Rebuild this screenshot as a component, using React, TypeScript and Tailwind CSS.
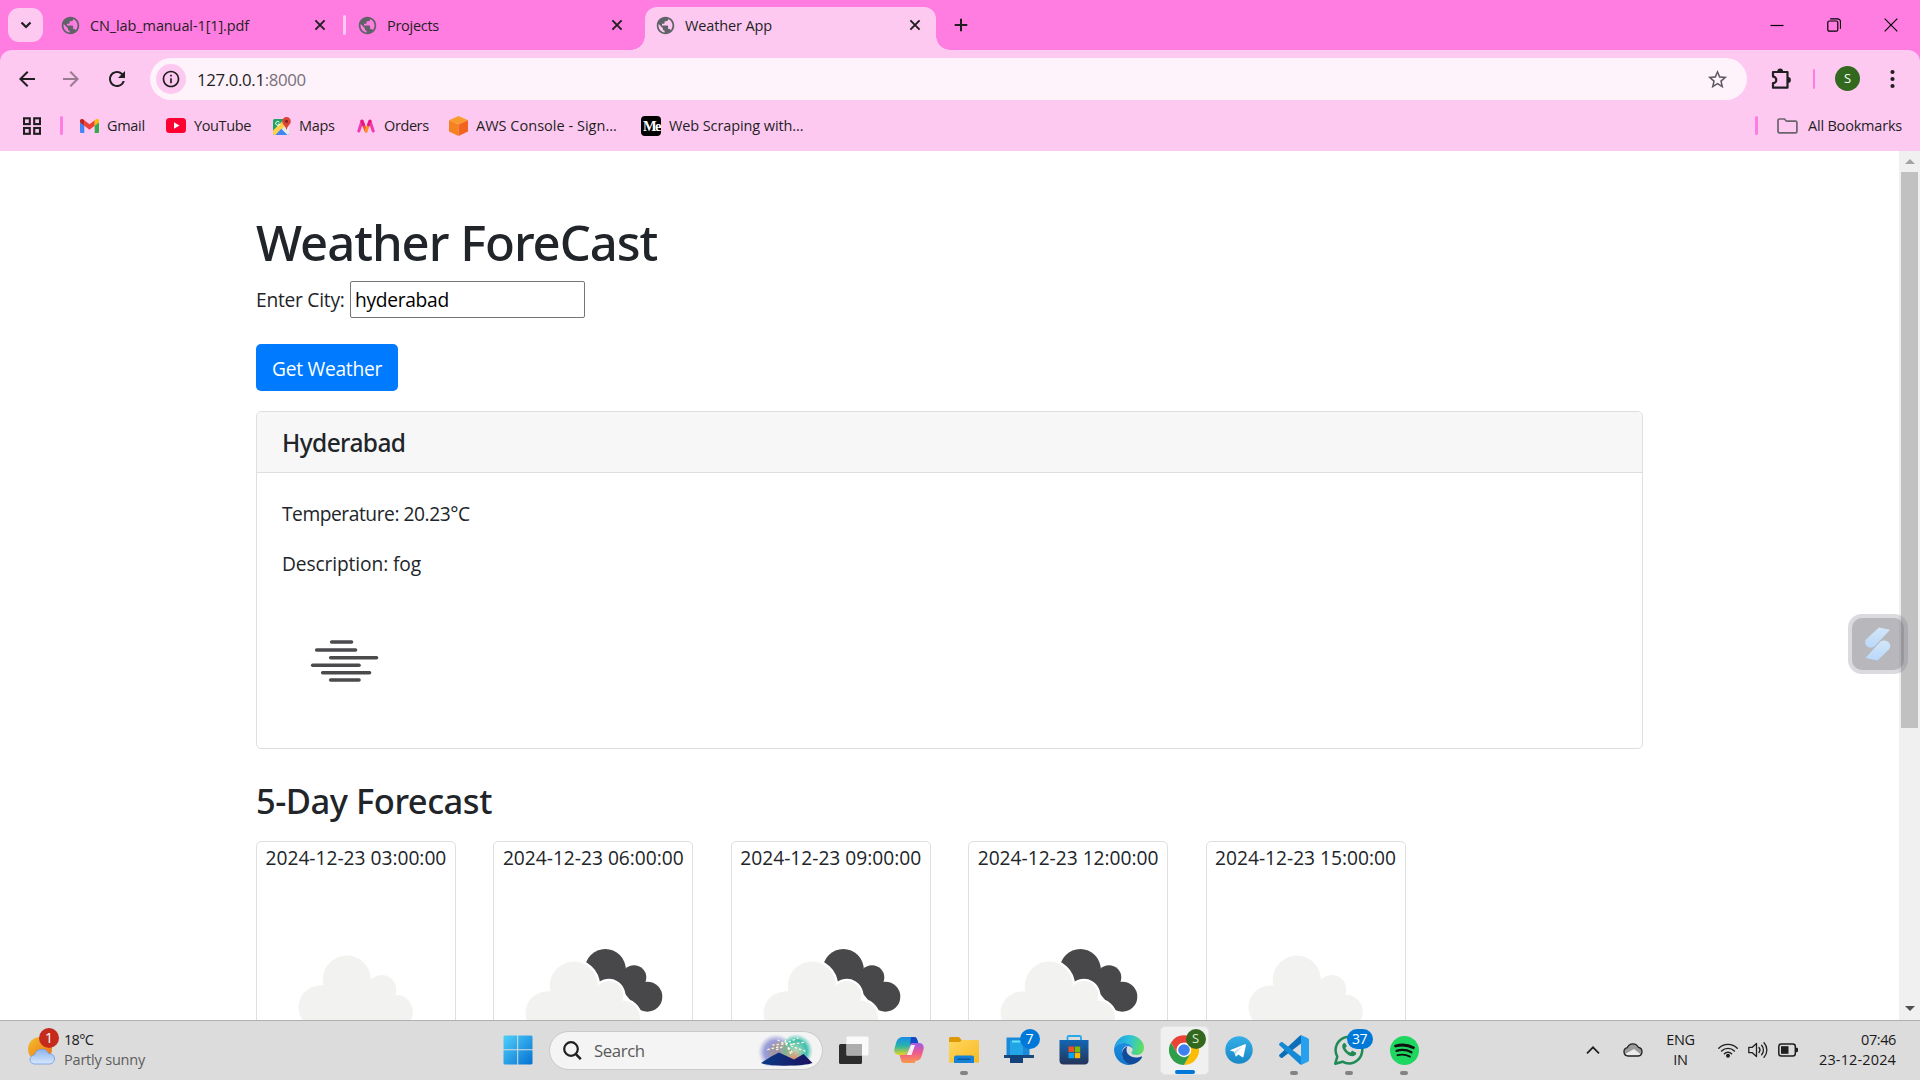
import React from "react";
import { MdPublic, MdArrowBack, MdArrowForward, MdRefresh, MdStarBorder, MdInfoOutline } from "react-icons/md";

type Kids = { children?: React.ReactNode };

const CloseX = () => (
  <svg className="size-4 shrink-0" viewBox="0 0 16 16" stroke="#1f1f1f" strokeWidth="1.9"><path d="M3.4 3.4l9.2 9.2M12.6 3.4l-9.2 9.2" /></svg>
);
const Globe = () => (
  <span className="flex size-[18px] shrink-0 items-center justify-center rounded-full"><MdPublic className="size-[21px] shrink-0 text-[#5f6368]" /></span>
);

function TabStrip() {
  return (
    <div className="flex h-[50px] items-stretch bg-[#ff7de1] text-[14.5px] text-[#1f1f1f]">
      <div className="mt-2 ml-2 flex h-[34px] w-[35px] items-center justify-center rounded-[11px] bg-[#fdc9f1]">
        <svg className="size-[16px]" viewBox="0 0 16 16" fill="none" stroke="#1f1f1f" strokeWidth="2.2"><path d="M3.5 5.5l4.5 4.5 4.5-4.5" /></svg>
      </div>
      <div className="flex w-[300px] items-center pr-[15px] pl-[18px]">
        <Globe />
        <span className="ml-[11px] flex-1 pt-[2px] tracking-[-0.11px] whitespace-nowrap">CN_lab_manual-1[1].pdf</span>
        <CloseX />
      </div>
      <div className="mt-[15px] h-5 w-[3px] rounded bg-[#fdc9f1]" />
      <div className="flex w-[299px] items-center pr-[20px] pl-[12px]">
        <Globe />
        <span className="ml-[11px] flex-1 pt-[2px] tracking-[-0.28px] whitespace-nowrap">Projects</span>
        <CloseX />
      </div>
      <div className="relative mt-[7px] flex w-[291px] items-center rounded-t-[12px] bg-[#fdc9f1] pr-[13px] pb-[7px] pl-[11px]">
        <div className="absolute bottom-0 -left-[14px] size-[14px] bg-[radial-gradient(circle_at_0_0,transparent_13.5px,#fdc9f1_14px)]" />
        <div className="absolute -right-[14px] bottom-0 size-[14px] bg-[radial-gradient(circle_at_100%_0,transparent_13.5px,#fdc9f1_14px)]" />
        <Globe />
        <span className="ml-[11px] flex-1 pt-[2px] tracking-[-0.13px] whitespace-nowrap">Weather App</span>
        <CloseX />
      </div>
      <svg className="mt-[15px] ml-[15px] size-5" viewBox="0 0 20 20" stroke="#1f1f1f" strokeWidth="2"><path d="M3.7 10h12.6M10 3.7v12.6" /></svg>
      <div className="ml-auto flex items-center gap-[43px] pr-[22px] pb-px">
        <svg className="size-[14px]" viewBox="0 0 14 14" stroke="#000" strokeWidth="1.2"><path d="M.5 7.500h13" /></svg>
        <svg className="size-[14px]" viewBox="0 0 14 14" fill="none" stroke="#000" strokeWidth="1.2"><rect x=".8" y="3" width="10" height="10.2" rx="1.5" /><path d="M3.2 .8h7.3a3 3 0 0 1 3 3v7" /></svg>
        <svg className="size-[14px]" viewBox="0 0 14 14" stroke="#000" strokeWidth="1.2"><path d="M.7.7l12.6 12.6M13.3.7L.7 13.3" /></svg>
      </div>
    </div>
  );
}

const PuzzleIcon = () => (
  <svg className="ml-[23px] h-[22px] w-[22px]" viewBox="0 0 22 22">
    <path d="M3 4h14.500v15.700H3v-4.500a3.200 3.200 0 0 0 0-6.600z" fill="none" stroke="#1f1f1f" strokeWidth="2.200" strokeLinejoin="round" />
    <path d="M7.300 3.500a2.900 2.900 0 0 1 5.800 0zM18 9a2.900 2.900 0 0 1 0 5.800z" fill="#1f1f1f" />
  </svg>
);

function Toolbar() {
  return (
    <div className="flex h-[58px] items-center text-[#1f1f1f]">
      <MdArrowBack className="ml-[15px] size-[24px]" />
      <MdArrowForward className="ml-[20px] size-[24px] opacity-45" />
      <MdRefresh className="ml-[22px] size-[24px]" />
      <div className="ml-[21px] flex h-[42px] w-[1597px] items-center rounded-full bg-[#fef2fb]">
        <div className="ml-[6px] flex size-[30px] items-center justify-center rounded-full bg-[#fdc9f1]"><MdInfoOutline className="size-[20px]" /></div>
        <span className="ml-[11px] flex-1 pt-px text-[16.8px] tracking-[-0.35px]">127.0.0.1<span className="text-[#77707a]">:8000</span></span>
        <MdStarBorder className="mr-[18px] size-[23px] text-[#5f5a62]" />
      </div>
      <PuzzleIcon />
      <div className="ml-[21px] h-5 w-[2px] rounded bg-[#ff7de1]" />
      <div className="mb-px ml-[20px] flex size-[25px] items-center justify-center rounded-full bg-[#33691e] text-[13px] text-white">S</div>
      <svg className="ml-[23px] h-[20px] w-[20px]" viewBox="0 0 20 20" fill="#1f1f1f"><circle cx="9.5" cy="3" r="2.1" /><circle cx="9.5" cy="10" r="2.1" /><circle cx="9.5" cy="17" r="2.1" /></svg>
    </div>
  );
}

const GmailIcon = () => (
  <svg className="h-[14px] w-[19px] shrink-0" viewBox="0 0 19 14">
    <path d="M0 3v9.7c0 .7.6 1.3 1.3 1.3h3V6.5z" fill="#4285f4" /><path d="M19 3v9.7c0 .7-.6 1.3-1.3 1.3h-3V6.5z" fill="#34a853" />
    <path d="M4.3 6.8V1.2l5.2 4 5.2-4v5.6l-5.2 4z" fill="#ea4335" /><path d="M0 3.3V2C0 .2 2-.7 3.4.4l.9.8v5.6z" fill="#c5221f" /><path d="M19 3.3V2c0-1.8-2-2.7-3.4-1.6l-.9.8v5.6z" fill="#fbbc04" />
  </svg>
);
const MapsIcon = () => (
  <svg className="size-[18px] shrink-0" viewBox="0 0 18 18">
    <rect y="2" width="16" height="16" rx="1.500" fill="#1da462" />
    <path d="M16 5v11.500c0 .8-.7 1.500-1.500 1.500H12L7.500 11z" fill="#e8eaed" />
    <path d="M0 13.500L11.500 2H14l2 3.500L2.500 18h-1C.7 18 0 17.300 0 16.500z" fill="#ffd04c" />
    <path d="M2.500 18L8.300 11.800 14.500 18z" fill="#4285f4" />
    <path d="M13.500 0a4.300 4.300 0 0 0-4.300 4.300c0 3.500 3.400 4.200 4.300 9 .9-4.800 4.300-5.500 4.300-9A4.300 4.300 0 0 0 13.500 0z" fill="#db4437" /><circle cx="13.500" cy="4.300" r="1.500" fill="#7b231e" />
    <path d="M6.300 5.200a2 2 0 1 0 .3 1.900H4.800" stroke="#fff" strokeWidth="1" fill="none" />
  </svg>
);
const OrdersIcon = () => (
  <svg className="h-[14px] w-[18px] shrink-0" viewBox="0 0 18 14" fill="none" strokeLinecap="round" strokeWidth="3">
    <path d="M1.800 12L5 2.200" stroke="#f13ab1" /><path d="M16.200 12L13 2.200" stroke="#f13ab1" /><path d="M5 2.200L9 12" stroke="#fd5722" /><path d="M13 2.200L9 12" stroke="#ff912e" /><path d="M5 2.200l1.500 3.600M13 2.200l-1.500 3.600" stroke="#e6138d" />
  </svg>
);
const AwsIcon = () => (
  <svg className="h-[20px] w-[19px] shrink-0" viewBox="0 0 19 20"><path d="M9.500 0L19 4.300 9.500 8.600 0 4.300z" fill="#fb9a2c" /><path d="M0 4.300l9.500 4.300V20L0 15.400z" fill="#f58220" /><path d="M19 4.300L9.500 8.600V20l9.500-4.600z" fill="#f1641e" /></svg>
);

function Bookmarks() {
  return (
    <div className="flex h-[43px] items-center pb-[8px] text-[14.5px] text-[#1f1f1f]">
      <svg className="ml-[23px] size-[18px] shrink-0" viewBox="0 0 18 18" fill="none" stroke="#1f1f1f" strokeWidth="2.100"><rect x="1" y="1.300" width="5.800" height="5.800" /><rect x="11.200" y="1.300" width="5.800" height="5.800" /><rect x="1" y="11" width="5.800" height="5.800" /><rect x="11.200" y="11" width="5.800" height="5.800" /></svg>
      <div className="ml-[19px] h-[19px] w-[3px] rounded bg-[#ff7de1]" />
      <div className="ml-[17px] flex w-[86px] items-center gap-[8px] tracking-[-0.3px]"><GmailIcon />Gmail</div>
      <div className="flex w-[107px] items-center gap-[8px] tracking-[-0.38px]">
        <svg className="h-[15px] w-[20px] shrink-0" viewBox="0 0 20 15"><rect width="20" height="15" rx="3.500" fill="#f03" /><path d="M8 4.300v6.400l5.500-3.200z" fill="#fff" /></svg>YouTube
      </div>
      <div className="flex w-[84px] items-center gap-[8px] tracking-[-0.35px]"><MapsIcon />Maps</div>
      <div className="flex w-[92px] items-center gap-[9px] tracking-[-0.4px]"><OrdersIcon />Orders</div>
      <div className="flex w-[192px] items-center gap-[8px] tracking-[0.02px]"><AwsIcon />AWS Console - Sign...</div>
      <div className="flex items-center gap-[8px] tracking-[-0.1px]">
        <span className="flex size-5 items-center overflow-hidden rounded-[4px] bg-black pl-[2px] font-['Liberation_Serif'] text-[14.5px] leading-5 font-bold tracking-[-1.6px] text-white">Me</span>
        Web Scraping with...
      </div>
      <div className="ml-auto h-[19px] w-[3px] rounded bg-[#ff7de1]" />
      <svg className="ml-[19px] h-[16px] w-[21px]" viewBox="0 0 21 16" fill="none" stroke="#6a646c" strokeWidth="1.700"><path d="M1 13.200V2.300C1 1.500 1.600 1 2.300 1h5.200l2 2.200h9c.8 0 1.400.6 1.400 1.300v8.900c0 .8-.6 1.400-1.400 1.400H2.300C1.600 14.800 1 14.100 1 13.200z" /></svg>
      <span className="mr-[17px] ml-[10px] w-[95px] tracking-[-0.2px] whitespace-nowrap">All Bookmarks</span>
    </div>
  );
}

const LIGHT = "M63 112.500A21.500 21.500 0 0 0 63 155.500H142A17 17 0 0 0 138.200 121.800A14.400 14.400 0 0 0 113.800 107.200A24 24 0 1 0 66.500 112.300Z";

function ForecastCard({ date, broken }: { date: string; broken: boolean }) {
  return (
    <div className="h-[260px] w-[200px] shrink-0 rounded-[5px] border border-[#dfdfdf] bg-white">
      <div className="h-[31px] pl-[8.5px] text-[19.2px] leading-[31px] tracking-[-0.01px] whitespace-nowrap">{date}</div>
      <svg className="block h-[200px] w-[198px]" viewBox="0 0 198 200">
        {broken ? (
          <>
            <g fill="#48484a"><circle cx="111.300" cy="96.500" r="20.500" /><circle cx="140" cy="104.500" r="12.300" /><circle cx="153.300" cy="123.700" r="15" /><path d="M111 96l30 4 12 18-8 20z" /></g>
            <path d={LIGHT} transform="translate(-10 6)" fill="#f2f2f0" stroke="#fff" strokeWidth="4.500" paintOrder="stroke" />
          </>
        ) : (
          <path d={LIGHT} fill="#f2f2f0" />
        )}
      </svg>
    </div>
  );
}

const FOG = [[48, 71, 43], [33, 75, 51], [47, 96, 58.8], [29, 78.500, 66.300], [39, 89, 73.700], [47, 78.500, 81]];
const FORECAST = [
  { date: "2024-12-23 03:00:00", broken: false },
  { date: "2024-12-23 06:00:00", broken: true },
  { date: "2024-12-23 09:00:00", broken: true },
  { date: "2024-12-23 12:00:00", broken: true },
  { date: "2024-12-23 15:00:00", broken: false },
];

function WeatherPage() {
  return (
    <div className="relative flex h-[869px] overflow-hidden bg-white text-[#212529]">
      <div className="w-[1899px] shrink-0 pt-[61px] pl-[256px]">
        <h1 className="h-[60px] font-['Noto_Sans'] text-[49px] leading-[60px] font-medium tracking-[-1.03px] whitespace-nowrap">Weather ForeCast</h1>
        <div className="mt-[9px] flex h-[37px] items-center text-[19.2px]">
          <span className="w-[94px] pt-[2px] tracking-[-0.25px] whitespace-nowrap">Enter City:</span>
          <div className="flex h-[37px] w-[235px] items-center rounded-[2px] border border-[#767676] pt-[2px] pl-[4px] tracking-[-0.3px] text-black">hyderabad</div>
        </div>
        <div className="mt-[26px] flex h-[47px] w-[142px] items-center rounded-[5px] bg-[#007bff] pt-[3px] pl-[16px] text-[19.2px] tracking-[-0.27px] whitespace-nowrap text-white">Get Weather</div>
        <div className="mt-[20px] h-[338px] w-[1387px] rounded-[5px] border border-[#dfdfdf]">
          <div className="flex h-[61px] items-center rounded-t-[4px] border-b border-[#dfdfdf] bg-[#f7f7f7] pt-[2px] pl-[25px] font-['Noto_Sans'] text-[24.5px] font-medium tracking-[-0.6px]">Hyderabad</div>
          <div className="pt-[26px] pl-[25px] text-[19.2px] leading-[30px]">
            <p className="tracking-[-0.45px]">Temperature: 20.23°C</p>
            <p className="mt-[20px] tracking-[-0.12px]">Description: fog</p>
            <svg className="mt-[20px] size-[125px]" viewBox="0 0 125 125" stroke="#4b4b4d" strokeWidth="3.400" strokeLinecap="round">
              {FOG.map(([a, b, y]) => <path key={y} d={`M${a + 1.6} ${y}H${b - 1.4}`} />)}
            </svg>
          </div>
        </div>
        <h3 className="mt-[31px] h-[42px] font-['Noto_Sans'] text-[34.5px] leading-[42px] font-medium tracking-[-0.48px]">5-Day Forecast</h3>
        <div className="mt-[19px] flex gap-[37.4px]">
          {FORECAST.map((f) => <ForecastCard key={f.date} {...f} />)}
        </div>
      </div>
      <div className="flex h-full w-[21px] flex-col items-center bg-[#f0f0f0]">
        <div className="flex h-[21px] items-center"><svg className="h-[5px] w-[10px]" viewBox="0 0 10 5" fill="#a3a3a3"><path d="M5 0l5 5H0z" /></svg></div>
        <div className="h-[556px] w-[17px] bg-[#c1c1c1]" />
        <svg className="mt-auto mb-[9px] h-[5px] w-[10px]" viewBox="0 0 10 5" fill="#505050"><path d="M5 5L0 0h10z" /></svg>
      </div>
      <div className="absolute top-[463px] left-[1848px] flex size-[60px] items-center rounded-[14px] bg-[#77778a]/27 p-[4px]">
        <div className="flex size-[52px] items-center justify-center rounded-[10px] bg-[#66666c]/30">
          <svg className="h-[34px] w-[26px]" viewBox="0 0 26 34">
            <defs><linearGradient id="sd" x1="0" y1="0" x2="0" y2="1"><stop offset="0" stopColor="#d3e6f8" /><stop offset="1" stopColor="#b9d8fa" /></linearGradient></defs>
            <path d="M14 .5l11 2.300L10 19c-3 2.500-7 2-8.800-.5-1.500-2.500-1.500-4.800.3-6.500z" fill="url(#sd)" /><path d="M12.500 33.500l-12-2.500L15 15c3-2.500 7.500-1.500 9.300 1 1.500 2.300 1.300 4.500-.5 6.500z" fill="url(#sd)" />
          </svg>
        </div>
      </div>
    </div>
  );
}

function Slot({ children, dot, badge }: Kids & { dot?: boolean; badge?: React.ReactNode }) {
  return (
    <div className="relative flex h-[60px] w-[55px] shrink-0 items-center justify-center pb-px">
      {children}
      {dot && <div className="absolute bottom-[6px] left-1/2 h-[4px] w-[8px] -translate-x-1/2 rounded-full bg-[#838383]" />}
      {badge}
    </div>
  );
}

function Taskbar() {
  return (
    <div className="flex h-[60px] items-center border-t border-[#b0b0b0] bg-[#dcdcdc] text-[14.5px] text-[#1a1a1a]">
      <div className="flex w-[490px] items-center pl-[28px]">
        <div className="relative size-[30px]">
          <svg className="size-[30px]" viewBox="0 0 30 30">
            <defs>
              <linearGradient id="sun" x1="0" y1="0" x2="1" y2="1"><stop stopColor="#f0c030" /><stop offset="1" stopColor="#f26a12" /></linearGradient>
              <linearGradient id="cl" x1="0" y1="0" x2="0" y2="1"><stop stopColor="#8db4ee" /><stop offset="1" stopColor="#d7e8fc" /></linearGradient>
            </defs>
            <circle cx="12" cy="13" r="12" fill="url(#sun)" /><path d="M6.500 28a4.500 4.500 0 0 1 0-9 7.500 7.500 0 0 1 14-1.500 5.300 5.300 0 0 1 1.500 10.500z" fill="url(#cl)" stroke="#6f9be6" strokeWidth=".8" />
          </svg>
          <div className="absolute -top-[8px] left-[11px] flex size-[20px] items-center justify-center rounded-full bg-[#c42b1c] text-[14px] leading-none text-white">1</div>
        </div>
        <div className="ml-[6px] pb-[2px] leading-[20px] whitespace-nowrap">
          <div className="tracking-[-0.7px]">18°C</div>
          <div className="tracking-[-0.2px] text-[#5c5c5c]">Partly sunny</div>
        </div>
      </div>
      <Slot>
        <svg className="size-[30px]" viewBox="0 0 30 30"><defs><linearGradient id="win" x1="0" y1="0" x2="1" y2="1"><stop stopColor="#4fd0fb" /><stop offset="1" stopColor="#0571d1" /></linearGradient></defs><path d="M1.500.500h12.700v13.700H.500V1.500zM15.200.500h13.300l1 1v12.700H15.200zM.500 15.200h13.700v14.300H1.500l-1-1zM15.200 15.200h14.300v13.300l-1 1H15.200z" fill="url(#win)" /></svg>
      </Slot>
      <div className="mb-px ml-[4px] flex h-[39px] w-[274px] shrink-0 items-center overflow-hidden rounded-full border border-[#c9c9c9] bg-[#f4f4f4]">
        <svg className="ml-[13px] size-[19px]" viewBox="0 0 19 19" fill="none" stroke="#1f1f1f" strokeWidth="2.200"><circle cx="8" cy="8" r="6.800" /><path d="M12.600 12.800l5.200 5.400" strokeWidth="2.500" /></svg>
        <span className="ml-[12px] flex-1 pt-px text-[16.8px] tracking-[-0.4px] text-[#5a5a5a]">Search</span>
        <svg className="mr-[8px] h-[32px] w-[56px]" viewBox="0 0 56 32">
          <defs>
            <radialGradient id="f1"><stop stopColor="#7c83cc" /><stop offset=".65" stopColor="#9ea0d8" /><stop offset="1" stopColor="#b3b4e0" stopOpacity="0" /></radialGradient>
            <radialGradient id="f2"><stop stopColor="#b5dcc0" /><stop offset=".65" stopColor="#40bfae" /><stop offset="1" stopColor="#5fcfc0" stopOpacity="0" /></radialGradient>
            <radialGradient id="f3"><stop stopColor="#f08a68" /><stop offset="1" stopColor="#e0b080" stopOpacity="0" /></radialGradient>
            <linearGradient id="mt"><stop stopColor="#0b3c86" /><stop offset="1" stopColor="#1c1060" /></linearGradient>
          </defs>
          <circle cx="18" cy="18" r="18" fill="url(#f1)" /><circle cx="38" cy="17" r="17" fill="url(#f2)" /><circle cx="22" cy="19" r="11" fill="#b9a27c" opacity=".5" /><circle cx="36" cy="24" r="10" fill="url(#f3)" />
          <path d="M3 29l11-7 7-3.500 15 7 9.500-5.500 9 9c-8 3.500-44 3.500-51.500 0z" fill="url(#mt)" />
          <g fill="none" stroke="#fff8dc" strokeWidth="1.300" strokeLinecap="round" strokeDasharray="1.500 3"><path d="M28 10l6 8M28 9l8 2M27 8l2-5M25 10l-10 1M25 9l-7-4M30 14l3 6M33 12l14 5M35 10l13-2M31 8l9-4M20 13l-12 3M24 13l-8 4" /></g>
        </svg>
      </div>
      <div className="w-[3.500px] shrink-0" />
      <Slot>
        <svg className="h-[28px] w-[30px]" viewBox="0 0 30 28"><rect y="8" width="23" height="20" rx="1.500" fill="#2d2d2d" /><rect x="7.500" y=".500" width="22" height="19" rx="1" fill="#fff" fillOpacity=".85" /><path d="M7.500 8H23v11.500H7.500z" fill="#adadad" /></svg>
      </Slot>
      <Slot>
        <svg className="size-[30px]" viewBox="0 0 30 30">
          <defs>
            <linearGradient id="c1" x1="0" y1="0" x2="0" y2="1"><stop stopColor="#1a8ce8" /><stop offset=".5" stopColor="#28b4a8" /><stop offset="1" stopColor="#e8d31e" /></linearGradient>
            <linearGradient id="c2" x1="0" y1="0" x2="0" y2="1"><stop stopColor="#a05be8" /><stop offset=".5" stopColor="#f05a8c" /><stop offset="1" stopColor="#f99a4a" /></linearGradient>
          </defs>
          <path d="M9 2h11c2 0 2.700 1 3.300 3l1 3h-5c-2 0-3 1-3.500 3l-2 6c-.6 2-1.800 3-3.800 3H5c-3.500 0-5.500-2.500-4.500-6.500l2-7C3.500 3.500 6 2 9 2z" fill="url(#c1)" />
          <path d="M17 2h3c2 0 2.700 1 3.300 3l1 3h-5c-2 0-3 1-3.300 2z" fill="#1748c4" />
          <path d="M21 28H10c-2 0-2.500-1-3.100-3l-1.300-5H10c2 0 3.200-1 3.800-3l2-6c.5-2 1.500-3 3.500-3H25c3.500 0 5.500 2.500 4.500 6.500l-2 7c-1 3-3.500 4.500-6.500 4.500z" fill="url(#c2)" />
          <path d="M17 10h4l-3.500 10h-4.800z" fill="#f5f0f4" />
        </svg>
      </Slot>
      <Slot dot>
        <svg className="h-[28px] w-[30px]" viewBox="0 0 30 28"><defs><linearGradient id="fo" x1="0" y1="0" x2="1" y2="1"><stop stopColor="#ffd75e" /><stop offset="1" stopColor="#f9b924" /></linearGradient></defs><path d="M0 2.500C0 1.500.8 1 1.500 1H10l3 3.500V9H0z" fill="#dd9a06" /><path d="M0 6h11l2-2h15.500c.8 0 1.500.6 1.500 1.500v21H0z" fill="url(#fo)" /><path d="M5 27v-5.500c0-1.300 1-2 2-2h16c1.200 0 2 .8 2 2V27z" fill="#1482d8" /><path d="M8.500 23.200h13" stroke="#0a4f94" strokeWidth="1.200" /></svg>
      </Slot>
      <Slot badge={<div className="absolute top-[8px] left-[28px] flex size-[20px] items-center justify-center rounded-full bg-[#0078d7] text-[14px] leading-none text-white">7</div>}>
        <svg className="h-[28px] w-[30px]" viewBox="0 0 30 28"><path d="M2.500 1.500h23v19h-23z" fill="#1a8ad8" /><path d="M0 19h30v3H0z" fill="#16497e" /><path d="M6 4.500h13V25H6z" fill="#22a5e6" /><path d="M8 4.500h9v2H8z" fill="#65e0fa" /><path d="M6 19h13v8H6z" fill="#14427a" /></svg>
      </Slot>
      <Slot>
        <svg className="size-[30px]" viewBox="0 0 30 30"><defs><linearGradient id="ms" x1="0" y1="0" x2="0" y2="1"><stop stopColor="#1366b4" /><stop offset="1" stopColor="#243459" /></linearGradient></defs><path d="M8.500 6V2.500c0-.8.500-1.500 1.500-1.500h10.500c1 0 1.500.7 1.500 1.500V6" fill="none" stroke="#28a8ea" strokeWidth="1.800" /><path d="M.500 5h29v20.500c0 2.500-1.500 4-4 4h-21c-2.500 0-4-1.500-4-4z" fill="url(#ms)" /><path d="M9.500 11.500H15V17H9.500z" fill="#f25022" /><path d="M15.700 11.500h5.500V17h-5.500z" fill="#7fba00" /><path d="M9.500 17.700H15v5.500H9.500z" fill="#00a4ef" /><path d="M15.700 17.700h5.500v5.500h-5.500z" fill="#ffb900" /></svg>
      </Slot>
      <Slot>
        <svg className="size-[30px]" viewBox="0 0 30 30">
          <defs>
            <linearGradient id="e1" x1="0" y1=".3" x2="1" y2=".5"><stop stopColor="#1c9ce6" /><stop offset=".5" stopColor="#2fc2d8" /><stop offset="1" stopColor="#5fe05a" /></linearGradient>
            <linearGradient id="e2" x1="0" y1="0" x2="0" y2="1"><stop stopColor="#1b8de0" /><stop offset="1" stopColor="#1276c8" /></linearGradient>
          </defs>
          <path d="M0 14C1 6 7 0 15 0s15 6 15 12.500c0 5-3.500 7.500-7.500 7.500-3 0-5-1-5-2.300 0-.8 1.200-1.400 1.200-3.700 0-3-3.500-6-8-6C5 8 1.500 11 0 14z" fill="url(#e1)" />
          <path d="M0 14C1.500 10.500 5 8 10.700 8c4.500 0 8 3 8 6-1.200-2-3.200-3-5-3-4 0-5.700 4-5.700 7.500 0 6 4.500 10.500 10 11-1 .3-2 .5-3 .5C7 30 0 23.500 0 14z" fill="url(#e2)" />
          <path d="M13.700 11C10 12.500 8 15.500 8 19c0 5 4 10.700 10 10.500 4.500-1 8-3.500 10-7 .4-.8-.3-1.300-1-1-1.500.7-3 1-5 1-6 0-9.500-4-9.500-7.500 0-1.700.4-3 1.200-4z" fill="#104a9c" />
        </svg>
      </Slot>
      <div className="relative mx-[3px] mb-px flex h-[49px] w-[49px] shrink-0 items-center justify-center rounded-[5px] border border-[#e4e4e4] bg-[#f0f0f0]">
        <svg className="size-[30px]" viewBox="0 0 30 30">
          <path d="M15 15L28 7.500A15 15 0 0 1 15 30l6-11z" fill="#fbbc04" /><path d="M15 15l6.300 3.700L15 30A15 15 0 0 1 2 7.500L8.600 18.700z" fill="#2f9e4a" />
          <path d="M15 7.800H28A15 15 0 0 0 2 7.500l6.500 11A7.200 7.200 0 0 1 15 7.800z" fill="#ea4335" /><circle cx="15" cy="15" r="7.200" fill="#fff" /><circle cx="15" cy="15" r="5.800" fill="#3f7fee" />
        </svg>
        <div className="absolute top-[2px] right-[2px] flex size-[20px] items-center justify-center rounded-full bg-[#33691e] text-[13px] leading-none text-[#dfe9d8]">S</div>
        <div className="absolute bottom-0 left-[14px] h-[4px] w-[20px] rounded-full bg-[#0078d7]" />
      </div>
      <Slot>
        <svg className="size-[28px]" viewBox="0 0 28 28"><defs><linearGradient id="tg" x1="0" y1="0" x2="0" y2="1"><stop stopColor="#35aee8" /><stop offset="1" stopColor="#1888c6" /></linearGradient></defs><circle cx="14" cy="14" r="13.700" fill="url(#tg)" /><path d="M5.500 14L19.800 8.300c.8-.3 1.300.2 1.100 1.200l-2.400 11c-.2.900-.8 1-1.500.6l-3.700-2.700-1.800 1.800c-.4.400-.9.200-1-.2l-1.300-4.200-3.600-1.100c-.6-.2-.6-.5-.1-.7z" fill="#fff" /><path d="M9.500 15.500l8-5-6 5.700-.5 3.500z" fill="#b7d8ec" /></svg>
      </Slot>
      <Slot dot>
        <svg className="size-[30px]" viewBox="0 0 30 30"><path d="M22 0l7 3.300c.6.300 1 .9 1 1.600v20.200c0 .7-.4 1.300-1 1.600L22 30z" fill="#27a1ef" /><path d="M22 .2v8.300L3.500 22.800c-.5.400-1.100.4-1.600 0L.4 21.400c-.5-.5-.5-1.200 0-1.700L20.500 1z" fill="#0a6fb8" /><path d="M22 29.800v-8.300L3.500 7.200c-.5-.4-1.100-.4-1.600 0L.4 8.600c-.5.500-.5 1.200 0 1.700L20.500 29z" fill="#1489d6" /></svg>
      </Slot>
      <Slot dot badge={<div className="absolute top-[8px] left-[25px] flex h-[20px] w-[26px] items-center justify-center rounded-full bg-[#0078d7] text-[14px] leading-none tracking-[-0.5px] text-white">37</div>}>
        <svg className="size-[30px]" viewBox="0 0 30 30" fill="none"><path d="M1.300 28.700l2-7.200A13.300 13.300 0 1 1 8.500 26.700z" stroke="#1f8a54" strokeWidth="2.500" strokeLinejoin="round" /><path d="M10.700 8c-.5-.1-1 .1-1.400.6-2 2.200-1 5.200 1.700 8.300 3.200 3.600 7 5.300 9.700 3.700 1-.6 1.500-1.500 1.500-2.500 0-.3-.1-.5-.4-.7l-3-1.500c-.4-.2-.7-.1-1 .2l-1.200 1.500c-2.400-.8-4-2.200-5.300-4.600l1.200-1.500c.2-.3.2-.6.1-.9L11.400 8.500c-.1-.3-.4-.5-.7-.5z" fill="#1f8a54" /></svg>
      </Slot>
      <Slot dot>
        <svg className="size-[29px]" viewBox="0 0 29 29" fill="none" strokeLinecap="round" stroke="#111"><circle cx="14.500" cy="14.500" r="14.500" fill="#1ed760" stroke="none" /><path d="M5.500 10c6.500-1.800 12.500-1.200 18 1.700" strokeWidth="2.800" /><path d="M6.500 14.800c5.500-1.500 10.500-1 15 1.500" strokeWidth="2.300" /><path d="M7.500 19.200c4.500-1.100 8.500-.7 12.500 1.400" strokeWidth="1.900" /></svg>
      </Slot>
      <div className="ml-auto flex items-center pr-[24px] pb-[2px]">
        <svg className="h-[8px] w-[14px]" viewBox="0 0 14 8" fill="none" stroke="#1f1f1f" strokeWidth="1.700"><path d="M1 7.300l6-6 6 6" /></svg>
        <svg className="ml-[23px] h-[15px] w-[20px]" viewBox="0 0 20 15"><path d="M5 14a4.200 4.200 0 0 1-.7-8.300 6 6 0 0 1 11-.4A4.400 4.400 0 0 1 15.200 14z" fill="#9b9b9b" /><path d="M2 12L11 7l7 5.500-3 1.500H5z" fill="#ececec" /><path d="M5 14a4.200 4.200 0 0 1-.7-8.300 6 6 0 0 1 11-.4A4.400 4.400 0 0 1 15.200 14z" fill="none" stroke="#222" strokeWidth="1.300" /></svg>
        <div className="ml-[22px] w-[31px] text-center leading-[20px] tracking-[-0.3px]"><div>ENG</div><div>IN</div></div>
        <svg className="ml-[22px] h-[16px] w-[20px]" viewBox="0 0 20 16" fill="none" stroke="#1f1f1f" strokeWidth="1.400" strokeLinecap="round"><path d="M.8 6.200a13 13 0 0 1 18.400 0M3.600 9a9 9 0 0 1 12.800 0M6.400 11.700a5.100 5.100 0 0 1 7.200 0" /><circle cx="10" cy="13.800" r="1.300" fill="#1f1f1f" /></svg>
        <svg className="ml-[10px] h-[18px] w-[20px]" viewBox="0 0 20 18" fill="none" stroke="#1f1f1f" strokeWidth="1.300" strokeLinecap="round" strokeLinejoin="round"><path d="M.8 6.300h3.500L8.500 2.500v13L4.300 11.700H.8zM11 6.500a4 4 0 0 1 0 5M13.600 4.200a7.200 7.200 0 0 1 0 9.600M16 1.800a10.500 10.500 0 0 1 0 14.400" /></svg>
        <svg className="ml-[10px] h-[14px] w-[20px]" viewBox="0 0 20 14"><rect x=".8" y="1" width="16.500" height="12" rx="2.500" fill="none" stroke="#1f1f1f" strokeWidth="1.500" /><rect x="3" y="3.200" width="7.500" height="7.600" fill="#1f1f1f" /><path d="M18 4.800h.8c.7 0 1.200.5 1.200 1.200v2c0 .7-.5 1.200-1.200 1.200H18z" fill="#1f1f1f" /></svg>
        <div className="ml-[18px] w-[80px] text-right leading-[20px]"><div className="tracking-[-0.4px]">07:46</div><div className="tracking-[0.13px]">23-12-2024</div></div>
      </div>
    </div>
  );
}

export default function App() {
  return (
    <div className="h-[1080px] w-[1920px] overflow-hidden bg-white font-['Open_Sans',sans-serif]">
      <TabStrip />
      <div className="bg-[#ff7de1]">
        <div className="rounded-t-[12px] bg-[#fdc9f1]">
          <Toolbar />
          <Bookmarks />
        </div>
      </div>
      <WeatherPage />
      <Taskbar />
    </div>
  );
}
